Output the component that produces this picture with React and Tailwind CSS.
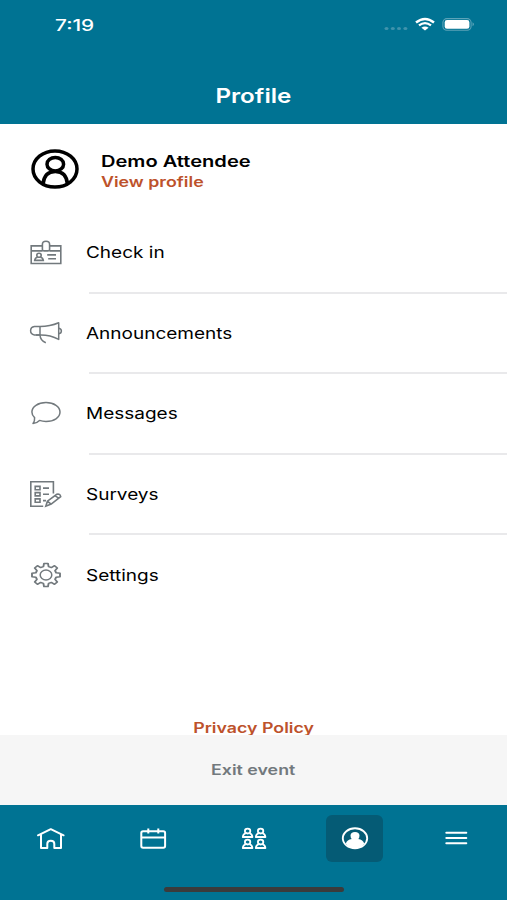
function StatusIcons() {
  return (
    <svg className="absolute left-[380px] top-[14px] h-5 w-[100px]" viewBox="380 14 100 20" fill="none">
      <g fill="#3f93ac">
        <ellipse cx="386.5" cy="28.5" rx="2" ry="1.6" />
        <ellipse cx="392.8" cy="28.5" rx="2" ry="1.6" />
        <ellipse cx="399" cy="28.5" rx="2" ry="1.6" />
        <ellipse cx="405.4" cy="28.5" rx="2" ry="1.6" />
      </g>
      <path d="M416 22.6 Q425 15.4 434 22.6" stroke="#fff" strokeWidth="2.5" />
      <path d="M419 25.4 Q425 20.8 431 25.4" stroke="#fff" strokeWidth="2.3" />
      <path d="M421.4 27.8 Q425 25.2 428.6 27.8 L425 30.6Z" fill="#fff" />
      <rect x="442.9" y="18.6" width="28.2" height="11.6" rx="4" stroke="#5ba3b8" strokeWidth="1.1" />
      <rect x="444.7" y="20.1" width="24.7" height="8.7" rx="2.3" fill="#fff" />
      <path d="M472.6 22.3 Q475 24.3 472.6 26.3Z" fill="#72b0c2" />
    </svg>
  );
}

function BadgeIcon() {
  return (
    <svg className="h-[30px] w-9" viewBox="28 237 36 30" fill="none" stroke="#72797d" strokeWidth="1.6">
      <path d="M42 245.9H31.2V263.5H60.8V245.9H50M31.2 250.9H42.5M49.5 250.9H60.8" />
      <path d="M42.4 249.2V244.4C42.4 240.2 49.6 240.2 49.6 244.4V249.2Q49.6 250.9 47.8 250.9H44.2Q42.4 250.9 42.4 249.2Z" />
      <ellipse cx="39" cy="255.2" rx="2.2" ry="2" />
      <path d="M37.5 257.2Q35 257.8 34.7 260.4H43.3Q43 257.8 40.5 257.2M47.2 254.9H56M48.2 258.7H56" />
    </svg>
  );
}

function MegaphoneIcon() {
  return (
    <svg className="h-[30px] w-9" viewBox="28 318 36 30" fill="none" stroke="#72797d" strokeWidth="1.5" strokeLinejoin="round">
      <path d="M58.7 322.7V339.4Q50 334.8 40 335H34.4Q30.6 334.4 30.6 330.8Q30.6 327 34.4 326.5H40Q50 326.4 58.7 322.7Z" />
      <path d="M40 326.5V335Q40.2 340.5 45.8 342.7M36 335.1H40M58.8 328.2Q61.4 328.6 61.4 331.1Q61.4 333.5 58.8 333.8" />
    </svg>
  );
}

function ChatIcon() {
  return (
    <svg className="h-[30px] w-9" viewBox="28 399 36 30" fill="none" stroke="#72797d" strokeWidth="1.5" strokeLinejoin="round">
      <path d="M46 403.6C54 403.6 60 407.7 60 413.1C60 418.6 54 422.5 46 422.5C43.5 422.5 41.4 422.1 39.5 421.4Q37 424 33 424.4Q34.9 422.2 34.6 418.7C32.8 417.2 31.9 415.3 31.9 413.1C31.9 407.7 38 403.6 46 403.6Z" />
    </svg>
  );
}

function SurveyIcon() {
  return (
    <svg className="h-[30px] w-9" viewBox="28 479 36 30" fill="none" stroke="#72797d" strokeWidth="1.6">
      <path d="M53.4 493.5V481.8H30.8V506.2H43.2" />
      <path d="M35.2 486.4H40V489.7H35.2ZM35.2 492.6H40V495.9H35.2ZM35.2 498.9H40V502.2H35.2ZM43 488.1H49M43 494.3H49M43 500.6H46" />
      <path d="M45.8 506.2L47.4 501.2L56.8 494.3Q60 493.4 60.7 496.6L51.2 504.1ZM47.6 501.3L51.1 504.1M54.9 495.7L58.6 498.2" />
    </svg>
  );
}

function GearIcon() {
  return (
    <svg className="h-[30px] w-9" viewBox="-18 -15 36 30" fill="none" stroke="#72797d" strokeWidth="1.5" strokeLinejoin="round">
      <path transform="scale(1.24 1.02)" d="M-1.6-11.3H1.6L2.1-8.2L4.3-7.3L6.9-9.1L9.1-6.9L7.3-4.3L8.2-2.1L11.3-1.6V1.6L8.2 2.1L7.3 4.3L9.1 6.9L6.9 9.1L4.3 7.3L2.1 8.2L1.6 11.3H-1.6L-2.1 8.2L-4.3 7.3L-6.9 9.1L-9.1 6.9L-7.3 4.3L-8.2 2.1L-11.3 1.6V-1.6L-8.2-2.1L-7.3-4.3L-9.1-6.9L-6.9-9.1L-4.3-7.3L-2.1-8.2Z" />
      <ellipse rx="5.8" ry="4.9" />
    </svg>
  );
}

function HomeIcon() {
  return (
    <svg className="h-7 w-8" viewBox="35 825 32 28" fill="none" stroke="#fff" strokeWidth="2" strokeLinejoin="round" strokeLinecap="round">
      <path d="M38 835.3L50.8 829.2L63.6 835.3M41 834.6V847.9H47.3V843.7Q47.3 840.7 50.8 840.7Q54.3 840.7 54.3 843.7V847.9H61V834.6" />
    </svg>
  );
}

function CalendarIcon() {
  return (
    <svg className="h-7 w-8" viewBox="136 825 32 28" fill="none" stroke="#fff" strokeWidth="2">
      <rect x="141.3" y="831.2" width="23.8" height="16.6" rx="1.8" />
      <path d="M141.3 837.4H165.1M148.3 828.4V833.5M158.3 828.4V833.5" />
    </svg>
  );
}

function Person({ x, y }) {
  return (
    <g transform={`translate(${x} ${y})`}>
      <ellipse cx="0" cy="-1.9" rx="2.7" ry="2.4" />
      <path d="M-1.8.1Q-4.5.9-4.8 4H4.8Q4.5.9 1.8.1" />
    </g>
  );
}

function PeopleIcon() {
  return (
    <svg className="h-7 w-8" viewBox="238 825 32 28" fill="none" stroke="#fff" strokeWidth="1.8" strokeLinejoin="round">
      <Person x={247.6} y={833} />
      <Person x={260.6} y={833} />
      <Person x={247.6} y={844} />
      <Person x={260.6} y={844} />
    </svg>
  );
}

function AccountIcon() {
  return (
    <svg className="h-7 w-8" viewBox="339 825 32 28">
      <ellipse cx="355" cy="838.3" rx="12.2" ry="10" fill="none" stroke="#fff" strokeWidth="1.9" />
      <path d="M345.8 843.5Q347 839.8 351.8 839.1Q350.5 837.8 350.5 835.5Q350.7 832 355 832Q359.3 832 359.5 835.5Q359.5 837.8 358.2 839.1Q363 839.8 364.2 843.5Q360.8 848.4 355 848.4Q349.2 848.4 345.8 843.5Z" fill="#fff" />
    </svg>
  );
}

function MenuIcon() {
  return (
    <svg className="h-7 w-8" viewBox="440 825 32 28" stroke="#fff" strokeWidth="2" strokeLinecap="round">
      <path d="M446.3 832.8H466.3M446.3 838H466.3M446.3 843.2H466.3" />
    </svg>
  );
}

const items = [
  { label: "Check in", Icon: BadgeIcon },
  { label: "Announcements", Icon: MegaphoneIcon },
  { label: "Messages", Icon: ChatIcon },
  { label: "Surveys", Icon: SurveyIcon },
  { label: "Settings", Icon: GearIcon },
];

const tabs = [
  { name: "home", Icon: HomeIcon },
  { name: "agenda", Icon: CalendarIcon },
  { name: "people", Icon: PeopleIcon },
  { name: "profile", Icon: AccountIcon, active: true },
  { name: "menu", Icon: MenuIcon },
];

export default function App() {
  return (
    <div className="flex h-[900px] w-[507px] flex-col overflow-hidden bg-white font-['Inter','Liberation_Sans',sans-serif] text-black">
      <header className="relative h-[124px] shrink-0 bg-[#007393] text-white">
        <div className="flex h-12 items-center pl-[55px] pt-px">
          <span className="origin-left scale-x-[1.3] text-base font-medium leading-5">7:19</span>
        </div>
        <StatusIcons />
        <h1 className="mt-9 flex justify-center text-[20px] font-semibold leading-6">
          <span className="scale-x-[1.21]">Profile</span>
        </h1>
      </header>

      <main className="flex min-h-0 flex-1 flex-col overflow-hidden">
        <section className="flex h-[89px] shrink-0 items-center pl-[31px]">
          <svg className="h-10 w-12 shrink-0" viewBox="0 0 48 40" fill="none" stroke="#000" strokeWidth="3.5">
            <ellipse cx="24" cy="20" rx="22" ry="18.1" />
            <ellipse cx="24.3" cy="15.2" rx="8.3" ry="6.7" />
            <path d="M12 35.3C12.8 26.5 17.5 22.6 24.3 22.6S35.8 26.5 36.5 35.3" />
          </svg>
          <div className="ml-[21.5px] flex flex-col items-start pt-1.5">
            <span className="origin-left scale-x-[1.255] whitespace-nowrap text-base font-semibold leading-[21px]">Demo Attendee</span>
            <span className="origin-left scale-x-[1.27] whitespace-nowrap text-[14px] font-semibold leading-5 text-[#bd522b]">View profile</span>
          </div>
        </section>
        <nav>
          {items.map(({ label, Icon }, i) => (
            <div key={label} className="flex h-[80.6px] flex-col">
              <div className="flex flex-1 items-center pl-7">
                <Icon />
                <span className="ml-[22px] origin-left scale-x-[1.187] whitespace-nowrap text-base leading-5">{label}</span>
              </div>
              <div className={i < items.length - 1 ? "ml-[89px] h-[2px] bg-[#e9e9eb]" : "h-[2px]"} />
            </div>
          ))}
        </nav>
        <div className="mt-auto flex h-[17px] shrink-0 justify-center overflow-hidden">
          <span className="scale-x-[1.27] text-[14px] font-semibold leading-5 text-[#bd522b]">Privacy Policy</span>
        </div>
      </main>

      <div className="flex h-[70px] shrink-0 items-center justify-center bg-[#f6f6f6]">
        <span className="scale-x-[1.27] text-[14px] font-semibold leading-5 text-[#72797d]">Exit event</span>
      </div>

      <footer className="flex h-[95px] shrink-0 flex-col bg-[#007393]">
        <div className="flex pt-[10px]">
          {tabs.map(({ name, Icon, active }) => (
            <div key={name} className="flex flex-1 justify-center">
              <div className={active ? "flex h-[47px] w-[57px] items-center justify-center rounded-md bg-[#055b75]" : "flex h-[47px] w-[57px] items-center justify-center"}>
                <Icon />
              </div>
            </div>
          ))}
        </div>
        <div className="mx-auto mt-[25px] h-[5px] w-[180px] rounded-full bg-[#3b3b3b]" />
      </footer>
    </div>
  );
}
